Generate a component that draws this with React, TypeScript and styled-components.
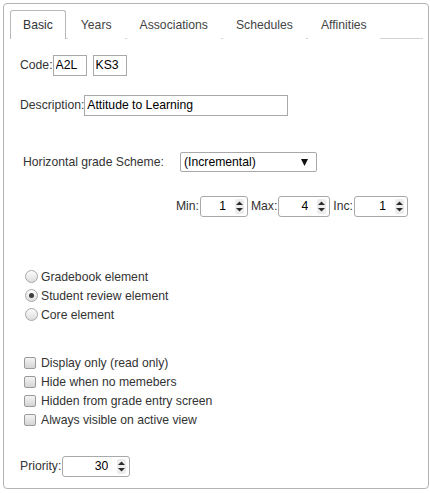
import React, { useState } from 'react';
import styled, { createGlobalStyle } from 'styled-components';

const FONT = '"Liberation Sans", Arial, sans-serif';

const GlobalStyle = createGlobalStyle`
  html, body {
    margin: 0;
    padding: 0;
    background: #ffffff;
  }
  body {
    font-family: ${FONT};
    font-size: 12.2px;
    color: #333333;
  }
`;

const Page = styled.div`
  padding: 3px 1px 2px 3px;
`;

const Frame = styled.div`
  border: 1px solid #b4b4b4;
  border-radius: 4px;
  padding: 6px 5px 12px 6px;
  background: #ffffff;
`;

const TabBar = styled.div`
  display: flex;
  gap: 2px;
  height: 28px;
  border-bottom: 1px solid #d2d2d2;
`;

const Tab = styled.div<{ $active?: boolean }>`
  height: 29px;
  padding: 0 12px 1px 12px;
  display: flex;
  align-items: center;
  box-sizing: border-box;
  color: ${({ $active }) => ($active ? '#333333' : '#444444')};
  border: 1px solid ${({ $active }) => ($active ? '#b8b8b8' : 'transparent')};
  border-bottom: none;
  border-radius: 3px 3px 0 0;
  background: #ffffff;
  margin-bottom: -1px;
  cursor: pointer;
`;

const Body = styled.div`
  padding: 16px 0 0 10px;
`;

const Row = styled.div<{ $top: number; $indent?: number }>`
  display: flex;
  align-items: center;
  height: 20px;
  margin-top: ${({ $top }) => $top}px;
  padding-left: ${({ $indent }) => $indent || 0}px;
`;

const EndRow = styled(Row)`
  justify-content: flex-end;
  padding-right: 12px;
`;

const Label = styled.span`
  white-space: nowrap;
`;

const TextBox = styled.input<{ $w: number }>`
  box-sizing: border-box;
  width: ${({ $w }) => $w}px;
  height: 21px;
  border: 1px solid #a9a9a9;
  padding: 0 2px;
  font-family: ${FONT};
  font-size: 12.2px;
  color: #000000;
  outline: none;
  margin-right: 6px;
`;

const SchemeLabel = styled.span`
  width: 157px;
`;

const SelectWrap = styled.div`
  position: relative;
  width: 137px;
  height: 20px;
`;

const Select = styled.select`
  appearance: none;
  box-sizing: border-box;
  width: 100%;
  height: 100%;
  border: 1px solid #a9a9a9;
  border-radius: 2px;
  padding: 0 0 0 3px;
  font-family: ${FONT};
  font-size: 12.2px;
  color: #000000;
  background: #ffffff;
  outline: none;
`;

const Caret = styled.svg`
  position: absolute;
  right: 9px;
  top: 7px;
  pointer-events: none;
`;

const NumBox = styled.div<{ $w: number }>`
  box-sizing: border-box;
  width: ${({ $w }) => $w}px;
  height: 21px;
  border: 1px solid #a9a9a9;
  border-radius: 3px;
  display: flex;
  align-items: center;
  margin: 0 3px 0 1px;
  background: #ffffff;
`;

const NumInput = styled.input`
  flex: 1;
  min-width: 0;
  border: none;
  outline: none;
  text-align: right;
  padding: 0 9px 0 0;
  font-family: ${FONT};
  font-size: 12.2px;
  color: #000000;
  background: transparent;
`;

const Spin = styled.svg`
  flex: none;
  margin-right: 3px;
`;

const Option = styled.label<{ $top?: number }>`
  display: flex;
  align-items: center;
  height: 19px;
  margin-top: ${({ $top }) => $top || 0}px;
  color: #333333;
  cursor: pointer;
`;

const OptionGroup = styled.div`
  margin-top: 51px;
`;

const Radio = styled.input`
  appearance: none;
  box-sizing: border-box;
  width: 13px;
  height: 13px;
  margin: 0 3px 0 5px;
  border-radius: 50%;
  border: 1px solid #a8a8a8;
  background: linear-gradient(#fdfdfd, #dcdcdc);
  display: grid;
  place-items: center;

  &:checked::after {
    content: '';
    width: 5px;
    height: 5px;
    border-radius: 50%;
    background: #3c3c3c;
  }
`;

const Check = styled.input`
  appearance: none;
  box-sizing: border-box;
  width: 12px;
  height: 12px;
  margin: 0 5px 0 4px;
  border-radius: 2px;
  border: 1px solid #9a9a9a;
  background: linear-gradient(#f4f4f4, #d4d4d4);
`;

const Spinner = () => (
  <Spin width="9" height="15" viewBox="0 0 9 15">
    <rect x="0" y="0" width="9" height="15" rx="2" fill="#ececec" />
    <path d="M1 6 L4.5 2.5 L8 6 Z" fill="#2c2c2c" />
    <path d="M1 9 L4.5 12.5 L8 9 Z" fill="#2c2c2c" />
  </Spin>
);

const NumberField: React.FC<{ w: number; value: number }> = ({ w, value }) => {
  const [v, setV] = useState(String(value));
  return (
    <NumBox $w={w}>
      <NumInput value={v} onChange={(e) => setV(e.target.value)} />
      <Spinner />
    </NumBox>
  );
};

const tabs = ['Basic', 'Years', 'Associations', 'Schedules', 'Affinities'];

const App: React.FC = () => {
  const [active, setActive] = useState('Basic');
  const [kind, setKind] = useState('review');

  return (
    <Page>
      <GlobalStyle />
      <Frame>
        <TabBar>
          {tabs.map((t) => (
            <Tab key={t} $active={t === active} onClick={() => setActive(t)}>
              {t}
            </Tab>
          ))}
        </TabBar>
        <Body>
          <Row $top={0}>
            <Label>Code:</Label>
            <TextBox $w={34} defaultValue="A2L" />
            <TextBox $w={34} defaultValue="KS3" />
          </Row>
          <Row $top={20}>
            <Label>Description:</Label>
            <TextBox $w={204} defaultValue="Attitude to Learning" />
          </Row>
          <Row $top={37} $indent={3}>
            <SchemeLabel>Horizontal grade Scheme:</SchemeLabel>
            <SelectWrap>
              <Select defaultValue="inc">
                <option value="inc">(Incremental)</option>
              </Select>
              <Caret width="7" height="7" viewBox="0 0 7 7">
                <path d="M0 0 H7 L3.5 7 Z" fill="#111" />
              </Caret>
            </SelectWrap>
          </Row>
          <EndRow $top={24}>
            <Label>Min:</Label>
            <NumberField w={48} value={1} />
            <Label>Max:</Label>
            <NumberField w={52} value={4} />
            <Label>Inc:</Label>
            <NumberField w={54} value={1} />
          </EndRow>

          <OptionGroup>
            <Option>
              <Radio type="radio" name="kind" checked={kind === 'grade'} onChange={() => setKind('grade')} />
              Gradebook element
            </Option>
            <Option>
              <Radio type="radio" name="kind" checked={kind === 'review'} onChange={() => setKind('review')} />
              Student review element
            </Option>
            <Option>
              <Radio type="radio" name="kind" checked={kind === 'core'} onChange={() => setKind('core')} />
              Core element
            </Option>
          </OptionGroup>

          <Option $top={29}>
            <Check type="checkbox" />
            Display only (read only)
          </Option>
          <Option>
            <Check type="checkbox" />
            Hide when no memebers
          </Option>
          <Option>
            <Check type="checkbox" />
            Hidden from grade entry screen
          </Option>
          <Option>
            <Check type="checkbox" />
            Always visible on active view
          </Option>

          <Row $top={27}>
            <Label>Priority:</Label>
            <NumberField w={68} value={30} />
          </Row>
        </Body>
      </Frame>
    </Page>
  );
};

export default App;
